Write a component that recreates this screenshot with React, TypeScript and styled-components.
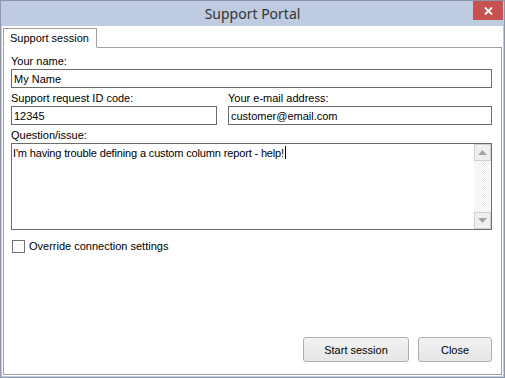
import styled, { createGlobalStyle } from 'styled-components';

const GlobalStyle = createGlobalStyle`
   html, body { margin: 0; padding: 0; background: #ffffff; }
   body { font-family: "Liberation Sans", Arial, sans-serif; font-size: 11px; color: #000; }
   * { box-sizing: border-box; }
`;

export default function App() {
   return (
      <>
         <GlobalStyle />
         <Window>
            <TitleBar>
               <span />
               <Title>Support Portal</Title>
               <CloseBox aria-label="close">
                  <svg width="9" height="8" viewBox="0 0 9 8">
                     <path d="M1 0.5 L8 7.5 M8 0.5 L1 7.5" stroke="#fff" strokeWidth="1.8" />
                  </svg>
               </CloseBox>
            </TitleBar>

            <Client>
               <TabStrip>
                  <Tab>Support session</Tab>
               </TabStrip>

               <Panel>
                  <Field>
                     <Label>Your name:</Label>
                     <Input defaultValue="My Name" />
                  </Field>

                  <TwoCols>
                     <Field>
                        <Label>Support request ID code:</Label>
                        <Input defaultValue="12345" />
                     </Field>
                     <Field>
                        <Label>Your e-mail address:</Label>
                        <Input defaultValue="customer@email.com" />
                     </Field>
                  </TwoCols>

                  <Field>
                     <Label>Question/issue:</Label>
                     <Memo>
                        <MemoText>
                           I'm having trouble defining a custom column report - help!<Caret />
                        </MemoText>
                        <ScrollBar>
                           <ScrollBtn>
                              <svg width="9" height="5" viewBox="0 0 9 5"><path d="M0 5 L4.5 0 L9 5 Z" fill="#a3a3a3" /></svg>
                           </ScrollBtn>
                           <Track />
                           <ScrollBtn>
                              <svg width="9" height="5" viewBox="0 0 9 5"><path d="M0 0 L4.5 5 L9 0 Z" fill="#a3a3a3" /></svg>
                           </ScrollBtn>
                        </ScrollBar>
                     </Memo>
                  </Field>

                  <CheckRow>
                     <CheckBox />
                     <span>Override connection settings</span>
                  </CheckRow>

                  <Buttons>
                     <Button $w={106}>Start session</Button>
                     <Button $w={74}>Close</Button>
                  </Buttons>
               </Panel>
            </Client>
         </Window>
      </>
   );
};

const Window = styled.div`
   width: 505px;
   height: 378px;
   display: flex;
   flex-direction: column;
   border: 1px solid #8d97a9;
   background: #bfcbe1;
`

const TitleBar = styled.div`
   height: 25px;
   display: grid;
   grid-template-columns: 1fr auto 1fr;
   align-items: start;
`

const Title = styled.div`
   font-family: "Noto Sans", "Open Sans", sans-serif;
   font-size: 14px;
   line-height: 25px;
   color: #333333;
`

const CloseBox = styled.div`
   justify-self: end;
   width: 30px;
   height: 19px;
   margin-right: 1px;
   background: #c75050;
   display: flex;
   align-items: center;
   justify-content: center;
`

const Client = styled.div`
   flex: 1;
   display: flex;
   flex-direction: column;
   margin: 0 1px 1px 1px;
   padding: 2px 1px 1px 1px;
   background: #ffffff;
`

const TabStrip = styled.div`
   display: flex;
   position: relative;
   z-index: 1;
   margin-bottom: -1px;
`

const Tab = styled.div`
   height: 20px;
   padding: 0 7px 0 6px;
   line-height: 18px;
   border: 1px solid #a0a0a0;
   border-bottom: 1px solid #ffffff;
   background: #ffffff;
`

const Panel = styled.div`
   flex: 1;
   display: flex;
   flex-direction: column;
   gap: 3px;
   padding: 6px 9px 12px 7px;
   border: 1px solid #a0a0a0;
`

const Field = styled.div`
   display: flex;
   flex-direction: column;
   gap: 1px;
`

const Label = styled.div`
   height: 14px;
   line-height: 14px;
`

const TwoCols = styled.div`
   display: grid;
   grid-template-columns: 206px 1fr;
   gap: 11px;
`

const Input = styled.input`
   height: 19px;
   padding: 0 2px;
   border: 1px solid #6e6e68;
   font: inherit;
   color: #000;
   outline: none;
`

const Memo = styled.div`
   height: 87px;
   display: flex;
   border: 1px solid #6e6e68;
`

const MemoText = styled.div`
   flex: 1;
   padding: 2px 1px;
   line-height: 14px;
   letter-spacing: -0.15px;
`

const Caret = styled.span`
   display: inline-block;
   width: 1px;
   height: 13px;
   margin-left: 1px;
   vertical-align: -2px;
   background: #000;
`

const ScrollBar = styled.div`
   width: 17px;
   display: flex;
   flex-direction: column;
`

const ScrollBtn = styled.div`
   height: 17px;
   display: flex;
   align-items: center;
   justify-content: center;
   background: #f0f0f0;
   border: 1px solid #cfcfcf;
`

const Track = styled.div`
   flex: 1;
   background-color: #fafafa;
   background-image: repeating-conic-gradient(#eeeeee 0 25%, #ffffff 0 50%);
   background-size: 2px 2px;
`

const CheckRow = styled.label`
   display: flex;
   align-items: center;
   gap: 4px;
   margin-top: 6px;
   padding-left: 1px;
   height: 14px;
`

const CheckBox = styled.span`
   width: 13px;
   height: 13px;
   border: 1px solid #707070;
   background: #ffffff;
`

const Buttons = styled.div`
   margin-top: auto;
   display: flex;
   justify-content: flex-end;
   gap: 9px;
`

const Button = styled.div<{ $w: number }>`
   width: ${p => p.$w}px;
   height: 25px;
   display: flex;
   align-items: center;
   justify-content: center;
   border: 1px solid #adadad;
   border-radius: 3px;
   background: linear-gradient(#f2f2f2, #e6e6e6);
`
